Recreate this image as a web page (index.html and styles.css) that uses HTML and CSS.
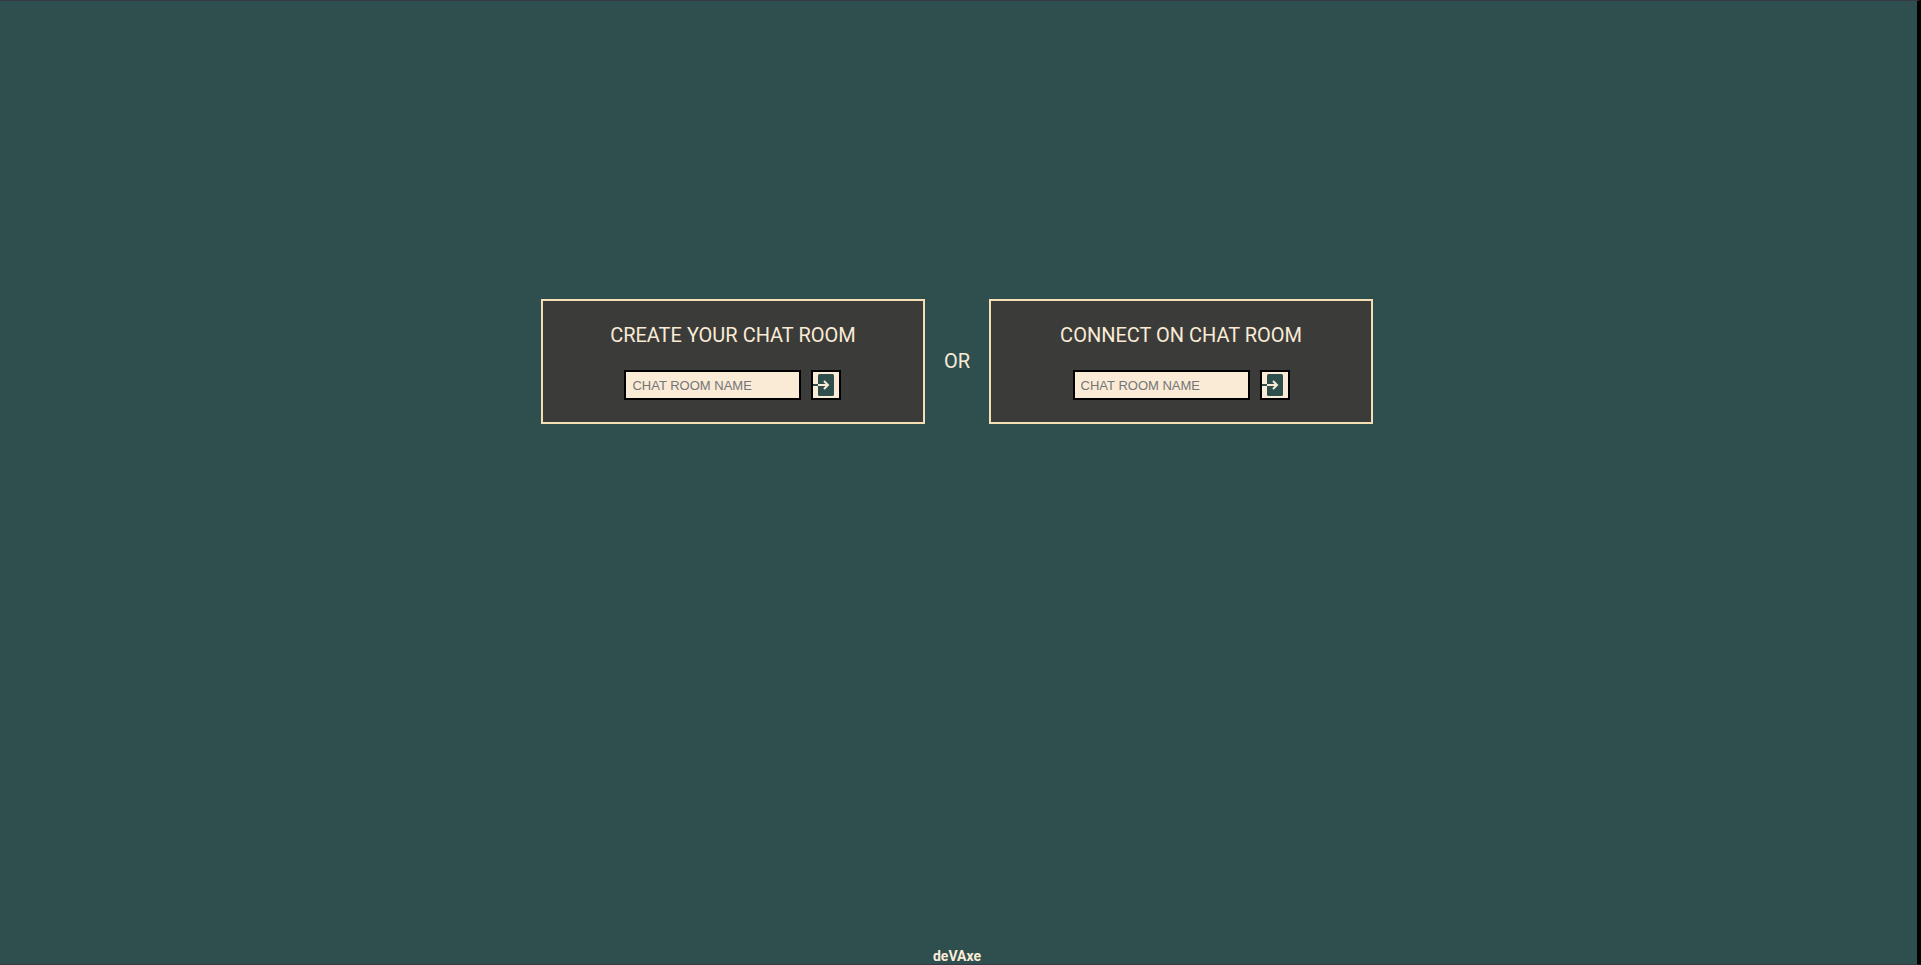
FILE: index.html
```html
<!DOCTYPE html>
<html lang="en">
<head>
<meta charset="utf-8">
<title>deVAxe chat</title>
<link rel="stylesheet" href="styles.css">
</head>
<body>
<main class="rooms">
  <form class="card">
    <label class="title" for="create-room">CREATE YOUR CHAT ROOM</label>
    <div class="row">
      <input class="field" id="create-room" type="text" placeholder="CHAT ROOM NAME">
      <button class="enter" type="submit" aria-label="Create room">
        <svg class="icon" viewBox="0 0 26 26" aria-hidden="true">
          <rect class="door" x="5" y="2" width="16" height="22" rx="1.5"/>
          <path class="tail" d="M0 13H5"/>
          <path class="arrow" d="M5 13H15M11 9L15 13L11 17"/>
        </svg>
      </button>
    </div>
  </form>
  <p class="or">OR</p>
  <form class="card">
    <label class="title" for="connect-room">CONNECT ON CHAT ROOM</label>
    <div class="row">
      <input class="field" id="connect-room" type="text" placeholder="CHAT ROOM NAME">
      <button class="enter" type="submit" aria-label="Connect to room">
        <svg class="icon" viewBox="0 0 26 26" aria-hidden="true">
          <rect class="door" x="5" y="2" width="16" height="22" rx="1.5"/>
          <path class="tail" d="M0 13H5"/>
          <path class="arrow" d="M5 13H15M11 9L15 13L11 17"/>
        </svg>
      </button>
    </div>
  </form>
</main>
<footer class="footer">deVAxe</footer>
</body>
</html>
```
FILE: styles.css
```css
* {
  box-sizing: border-box;
}

body {
  margin: 0;
  min-height: 100vh;
  padding-right: 3px;
  display: flex;
  flex-direction: column;
  background: #2f4f4f;
  border-top: 1px solid #383846;
  border-right: 4px solid #000;
  border-bottom: 1px solid #383846;
  color: #faebd7;
  font-family: Roboto, sans-serif;
}

.rooms {
  flex: 1;
  display: flex;
  justify-content: center;
  align-items: flex-start;
  padding-top: 298px;
}

.card {
  width: 20vw;
  min-width: 300px;
  padding: 20px 20px 22px;
  display: flex;
  flex-direction: column;
  align-items: center;
  gap: 20px;
  background: #3b3c39;
  border: 2px solid #f5deb3;
}

.title,
.or {
  font-size: 20px;
  line-height: 29px;
}

.or {
  width: 64px;
  margin: 0;
  padding-top: 48px;
  text-align: center;
}

.row {
  display: flex;
  gap: 10px;
}

.field {
  width: 177px;
  height: 30px;
  padding: 0 6px;
  border: 2px solid #000;
  border-radius: 0;
  background: #faebd7;
  font: 13px "Liberation Sans", Arial, sans-serif;
}

.field::placeholder {
  color: #757575;
}

.enter {
  width: 30px;
  height: 30px;
  padding: 0;
  border: 2px solid #000;
  background: #faebd7;
}

.icon {
  display: block;
  width: 26px;
  height: 26px;
}

.door {
  fill: #2f4f4f;
}

.tail,
.arrow {
  fill: none;
  stroke-width: 2;
}

.tail {
  stroke: #2f4f4f;
}

.arrow {
  stroke: #faebd7;
}

.footer {
  text-align: center;
  font-size: 14px;
  line-height: 16px;
  font-weight: bold;
}
```
